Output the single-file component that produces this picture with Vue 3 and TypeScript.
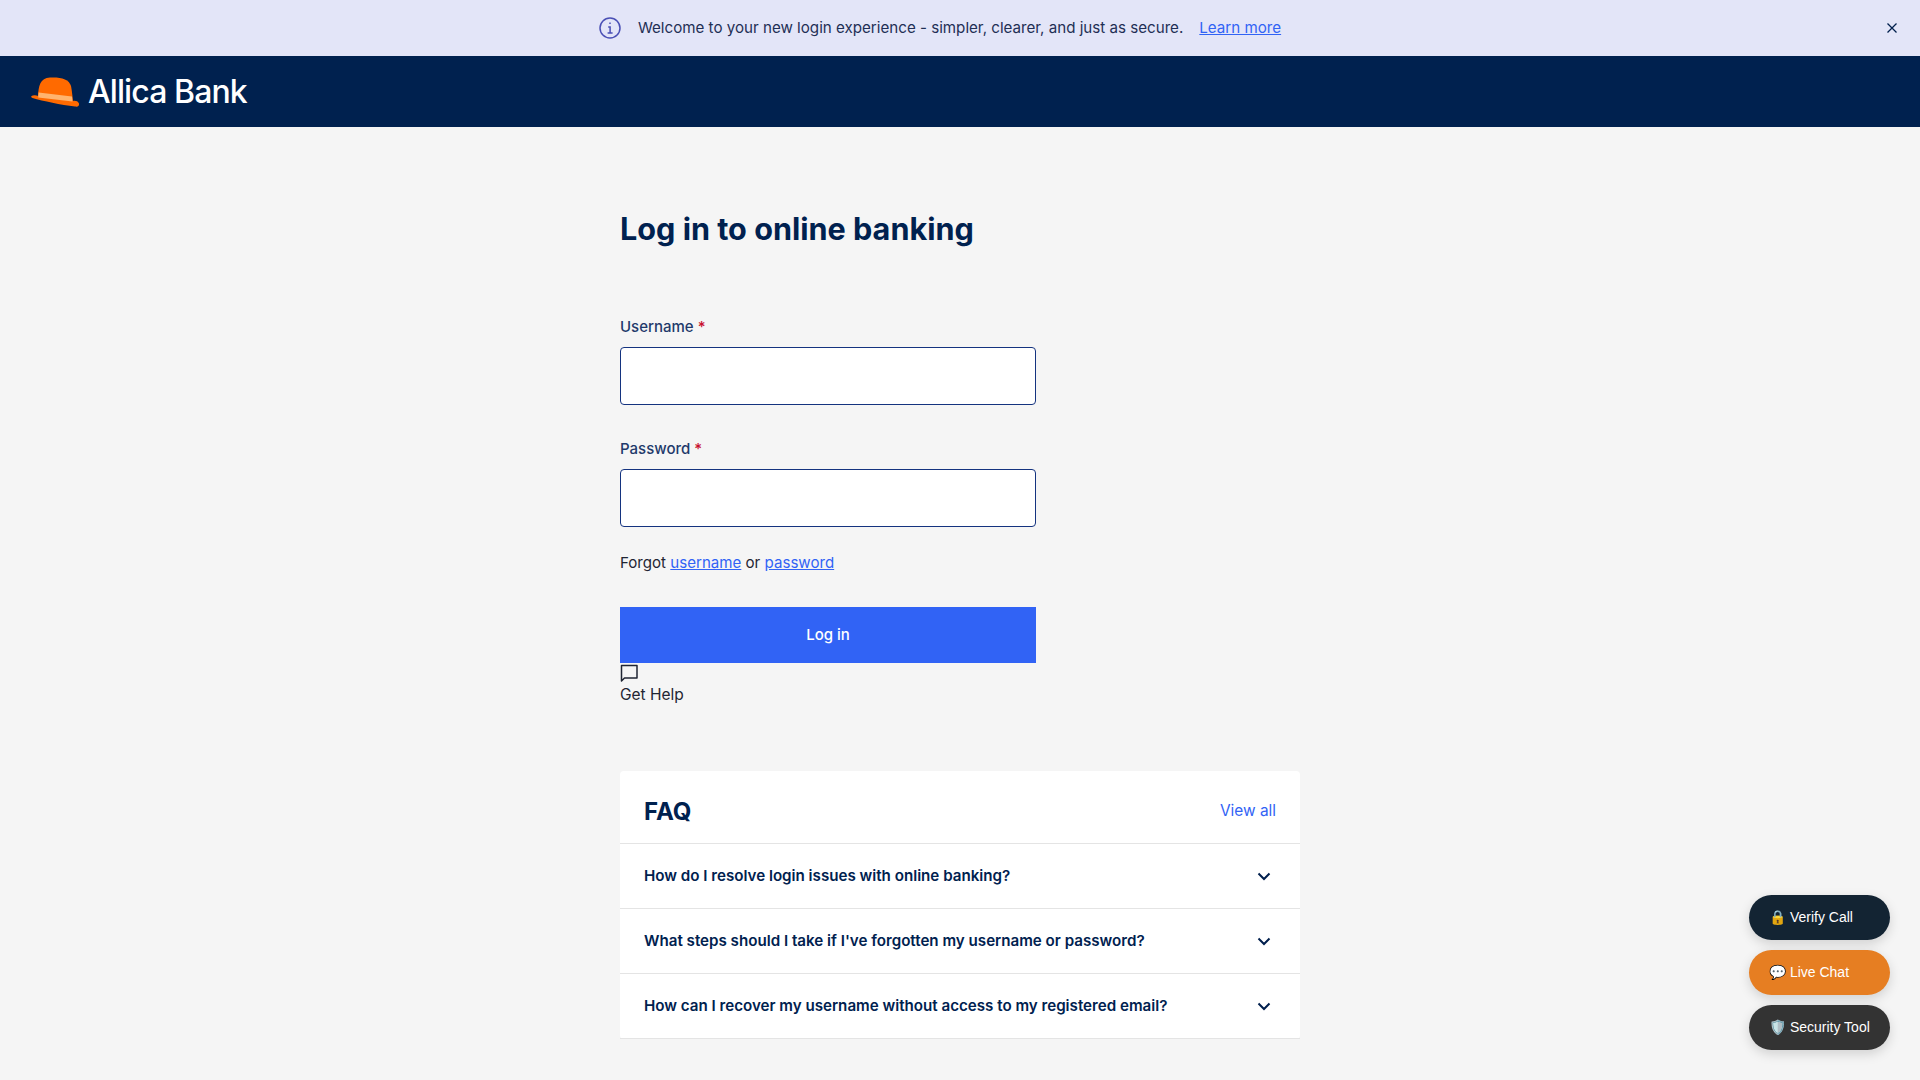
<template>
  <div class="page">
    <div class="banner">
      <svg class="banner-info" viewBox="0 0 24 24" width="24" height="24" fill="none" stroke="#4a4fb5" stroke-width="1.5" aria-hidden="true">
        <circle cx="12" cy="12" r="10" />
        <path d="M12 6.600v1.400M10.200 11h1.900v5.800M9.600 17h5" />
      </svg>
      <span class="banner-text">Welcome to your new login experience - simpler, clearer, and just as secure.</span>
      <a class="link banner-link" href="#">Learn more</a>
      <svg class="banner-close" viewBox="0 0 12 12" width="12" height="12" fill="none" stroke="#001f4d" stroke-width="1.300" aria-hidden="true">
        <path d="M1.500 1.500l9 9M10.500 1.500l-9 9" />
      </svg>
    </div>

    <header class="topbar">
      <svg class="hat" viewBox="0 0 50 32" width="50" height="32" aria-hidden="true">
        <path d="M0.500 20C2 19 5 19 7.200 20L42 25C44 24.500 47 25 48 27.500C48.500 30 47 31 44 30.500C30 29 12 25 1.500 22C0 21.500 0 20.500 0.500 20Z" fill="#ff6a00" />
        <path d="M7 20C7.500 10 9 2 19 1.500C30 1 38 3 40 10C41 15 41.500 20 42 26Z" fill="#ff6a00" />
        <path d="M7.600 16.500L41 20.500L41.500 25.500L7.200 21.500Z" fill="#ffb46e" />
      </svg>
      <span class="brand">Allica Bank</span>
    </header>

    <main class="content">
      <h1 class="title">Log in to online banking</h1>

      <form class="form" @submit.prevent>
        <label class="field">
          <span class="field-label">Username <em>*</em></span>
          <input class="input" type="text" />
        </label>
        <label class="field">
          <span class="field-label">Password <em>*</em></span>
          <input class="input" type="password" />
        </label>
        <p class="forgot">Forgot <a class="link" href="#">username</a> or <a class="link" href="#">password</a></p>
        <button class="submit" type="submit">Log in</button>
        <a class="help" href="#">
          <svg viewBox="0 0 18 18" width="18" height="18" fill="none" stroke="#1f2533" stroke-width="1.500" aria-hidden="true">
            <path d="M1.500 17V1.500h15.500v12.500H4.500Z" stroke-linejoin="round" />
          </svg>
          <span>Get Help</span>
        </a>
      </form>

      <section class="faq">
        <div class="faq-head">
          <h2>FAQ</h2>
          <a class="view-all" href="#">View all</a>
        </div>
        <div v-for="q in questions" :key="q" class="faq-row">
          <span class="faq-question">{{ q }}</span>
          <svg viewBox="0 0 14 9" width="14" height="9" fill="none" stroke="#001f4d" stroke-width="2" aria-hidden="true">
            <path d="M1.500 1.500L7 7l5.500-5.500" />
          </svg>
        </div>
      </section>
    </main>

    <div class="floating">
      <button class="float-btn verify">🔒 Verify Call</button>
      <button class="float-btn chat">💬 Live Chat</button>
      <button class="float-btn security">🛡️ Security Tool</button>
    </div>
  </div>
</template>

<script setup lang="ts">
const questions: string[] = [
  'How do I resolve login issues with online banking?',
  "What steps should I take if I've forgotten my username or password?",
  'How can I recover my username without access to my registered email?',
]
</script>

<style>
html,
body {
  margin: 0;
  background: #f5f5f5;
}
</style>

<style scoped>
.page {
  position: relative;
  height: 1080px;
  overflow: hidden;
  background: #f5f5f5;
  font-family: Inter, 'Liberation Sans', sans-serif;
  color: #1f2533;
}

.link {
  color: #3163f5;
  text-decoration: underline;
}

.banner {
  position: relative;
  display: flex;
  align-items: center;
  justify-content: center;
  box-sizing: border-box;
  height: 56px;
  padding: 0 41px 1px 0;
  background: #e3e5f8;
  color: #1f2f55;
  font-size: 15.150px;
}

.banner-info {
  margin-right: 16px;
}

.banner-link {
  margin-left: 16px;
}

.banner-close {
  position: absolute;
  top: 22px;
  right: 22px;
}

.topbar {
  display: flex;
  align-items: center;
  height: 71px;
  padding-left: 31px;
  background: #00214f;
}

.hat {
  margin-right: 7px;
}

.brand {
  color: #fff;
  font-size: 32px;
  font-weight: 500;
  letter-spacing: -0.900px;
}

.content {
  width: 680px;
  margin: 0 auto;
}

.title {
  margin: 84px 0 0;
  color: #00214f;
  font-size: 30.600px;
  line-height: 36px;
  font-weight: 700;
}

.form {
  display: flex;
  flex-direction: column;
  width: 416px;
  margin-top: 70px;
}

.field {
  display: flex;
  flex-direction: column;
  gap: 10px;
  margin-bottom: 34px;
}

.field-label {
  color: #1f3a6b;
  font-size: 15px;
  line-height: 20px;
  font-weight: 500;
}

.field-label em {
  color: #c8102e;
  font-style: normal;
}

.input {
  box-sizing: border-box;
  height: 58px;
  border: 1px solid #14337f;
  border-radius: 4px;
  background: #fff;
}

.forgot {
  margin: -8px 0 0;
  font-size: 15.100px;
  line-height: 20px;
}

.submit {
  height: 56px;
  margin-top: 34px;
  padding-bottom: 2px;
  border: 0;
  background: #3163f5;
  color: #fff;
  font-family: inherit;
  font-size: 15px;
  font-weight: 500;
}

.help {
  display: flex;
  flex-direction: column;
  align-items: flex-start;
  gap: 1px;
  margin-top: 1px;
  color: #1f2533;
  font-size: 15.500px;
  line-height: 24px;
  text-decoration: none;
}

.faq {
  margin-top: 64px;
  border-radius: 4px;
  background: #fff;
}

.faq-head {
  display: flex;
  align-items: center;
  justify-content: space-between;
  box-sizing: border-box;
  height: 73px;
  padding: 8px 24px 0;
  border-bottom: 1px solid #e4e4e4;
}

.faq-head h2 {
  margin: 0;
  color: #00214f;
  font-size: 24px;
  font-weight: 700;
}

.view-all {
  margin-bottom: 2px;
  color: #3163f5;
  font-size: 15.400px;
  text-decoration: none;
}

.faq-row {
  display: flex;
  align-items: center;
  justify-content: space-between;
  height: 64px;
  padding: 0 29px 0 24px;
  border-bottom: 1px solid #e4e4e4;
  color: #00214f;
  font-size: 15.150px;
  font-weight: 600;
}

.faq-question {
  margin-bottom: 2px;
}

.floating {
  position: absolute;
  right: 30px;
  bottom: 30px;
  display: flex;
  flex-direction: column;
  gap: 10px;
}

.float-btn {
  width: 141px;
  height: 45px;
  padding: 0 20px 2px;
  border: 0;
  border-radius: 25px;
  box-shadow: 0 4px 12px rgba(0, 0, 0, 0.15);
  color: #fff;
  font-family: 'Liberation Sans', sans-serif;
  font-size: 14px;
  text-align: left;
  white-space: nowrap;
}

.verify {
  background: #132433;
}

.chat {
  background: #e67e22;
}

.security {
  background: #333;
}
</style>
